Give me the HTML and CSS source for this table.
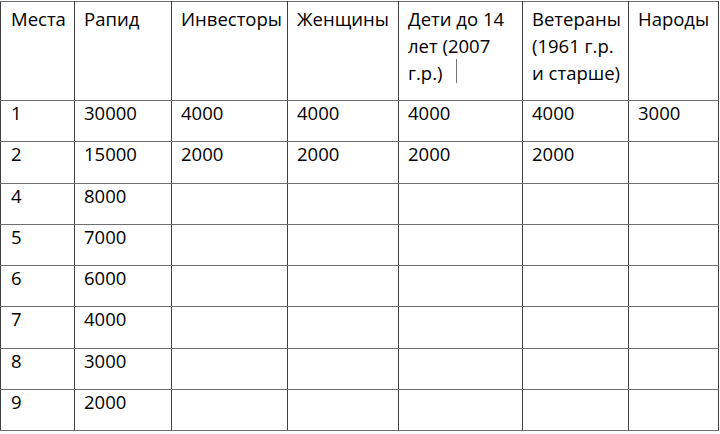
FILE: index.html
```html
<!DOCTYPE html>
<html lang="ru">
<head>
<meta charset="utf-8">
<link rel="stylesheet" href="styles.css">
</head>
<body>
<table class="prizes">
  <colgroup>
    <col class="c1"><col class="c2"><col class="c3"><col class="c4"><col class="c5"><col class="c6"><col class="c7">
  </colgroup>
  <thead>
    <tr>
      <th>Места</th>
      <th>Рапид</th>
      <th>Инвесторы</th>
      <th>Женщины</th>
      <th>Дети до 14<br>лет (2007<br>г.р.)<span class="caret"></span></th>
      <th>Ветераны<br>(1961 г.р.<br>и старше)</th>
      <th>Народы</th>
    </tr>
  </thead>
  <tbody>
    <tr><td>1</td><td>30000</td><td>4000</td><td>4000</td><td>4000</td><td>4000</td><td>3000</td></tr>
    <tr><td>2</td><td>15000</td><td>2000</td><td>2000</td><td>2000</td><td>2000</td><td></td></tr>
    <tr><td>4</td><td>8000</td><td></td><td></td><td></td><td></td><td></td></tr>
    <tr><td>5</td><td>7000</td><td></td><td></td><td></td><td></td><td></td></tr>
    <tr><td>6</td><td>6000</td><td></td><td></td><td></td><td></td><td></td></tr>
    <tr><td>7</td><td>4000</td><td></td><td></td><td></td><td></td><td></td></tr>
    <tr><td>8</td><td>3000</td><td></td><td></td><td></td><td></td><td></td></tr>
    <tr><td>9</td><td>2000</td><td></td><td></td><td></td><td></td><td></td></tr>
  </tbody>
</table>
</body>
</html>
```
FILE: styles.css
```css
html, body {
  margin: 0;
  padding: 0;
  background: #ffffff;
}
body {
  padding-top: 1px;
  font-family: "Open Sans", "Noto Sans", sans-serif;
  font-size: 18.5px;
  color: #000000;
}
.prizes {
  border-collapse: collapse;
  table-layout: fixed;
  width: 718px;
}
.c1 { width: 74px; }
.c2 { width: 97px; }
.c3 { width: 116px; }
.c4 { width: 111px; }
.c5 { width: 124px; }
.c6 { width: 106px; }
.c7 { width: 90px; }
.prizes th,
.prizes td {
  border-left: 1px solid #404040;
  border-right: 1px solid #404040;
  border-top: 1px solid #6e6e6e;
  border-bottom: 1px solid #6e6e6e;
  text-align: left;
  vertical-align: top;
  font-weight: normal;
  padding: 0 0 0 9px;
  white-space: nowrap;
  overflow: hidden;
}
.prizes th {
  height: 95px;
  padding-top: 3px;
  line-height: 27px;
}
.prizes th:first-child,
.prizes td:first-child {
  padding-left: 10px;
}
.prizes td {
  height: 40.3px;
  line-height: 24px;
}
.caret {
  display: inline-block;
  width: 0;
  height: 24px;
  border-left: 1px solid #777777;
  margin-left: 14px;
  vertical-align: -3px;
}
```
